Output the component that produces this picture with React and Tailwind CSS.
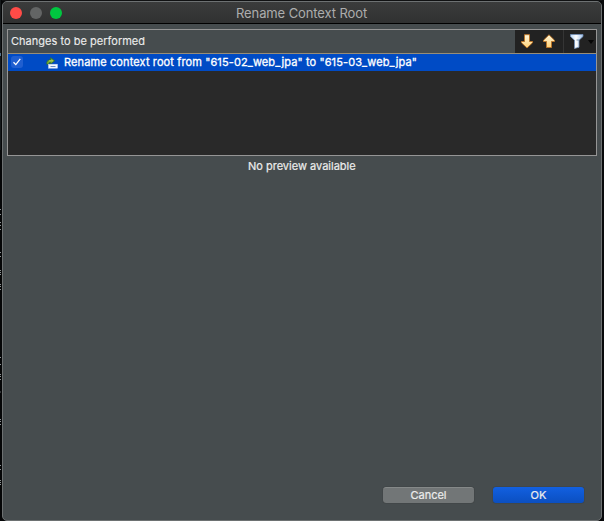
const ticks = [209, 214, 222, 225, 229, 252, 256, 270, 272, 274, 284, 286, 289, 357, 364, 374, 376, 379, 419, 421, 424, 465, 469, 480, 482, 484];

function BackgroundEdge() {
  return (
    <svg className="block h-[521px] w-0.5 shrink-0" viewBox="0 0 2 521" shapeRendering="crispEdges">
      <rect width="2" height="521" fill="#050607" />
      <rect width="1" height="150" fill="#15191b" />
      <rect y="53" width="1" height="3" fill="#56758f" />
      {ticks.map((y) => (
        <rect key={y} y={y} width="1" height="1" fill="#8b9092" />
      ))}
      <rect y="391" width="1" height="2" fill="#333638" />
    </svg>
  );
}

function Arrow({ up }) {
  return (
    <svg className="block h-[15px] w-3" viewBox="0 0 12 15">
      <defs>
        <linearGradient id={up ? "goldUp" : "goldDown"} x1="0" y1="0" x2="0" y2="1">
          <stop offset="0" stopColor="#fff7dc" />
          <stop offset="1" stopColor="#ffd175" />
        </linearGradient>
      </defs>
      <path
        d={up ? "M3.5 13.5h5V7.500h3V6.200L6 .8.500 6.200v1.300h3z" : "M3.5 .7h5v6.8h3v1.3L6 14 .5 8.800V7.500h3z"}
        fill={up ? "url(#goldUp)" : "url(#goldDown)"}
        stroke="#b9752b"
        strokeLinejoin="round"
      />
    </svg>
  );
}

function FilterIcon() {
  return (
    <svg className="block h-[15px] w-[14px]" viewBox="0 0 14 15">
      <defs>
        <linearGradient id="funnel">
          <stop offset="0" stopColor="#b8d6f5" />
          <stop offset=".45" stopColor="#ffffff" />
          <stop offset="1" stopColor="#9fc0e8" />
        </linearGradient>
      </defs>
      <path d="M.5.5h12.500v2L9 6.200v7L4.500 14.500V6.200L.5 2.500z" fill="url(#funnel)" stroke="#7391b9" strokeWidth=".8" />
      <path d="M6.500 6h3" stroke="#58789c" strokeWidth=".8" />
    </svg>
  );
}

function RenameIcon() {
  return (
    <svg className="block h-3 w-3" viewBox="0 0 12 12">
      <path d="M.7 7.200C.3 4.300 2 2.800 4.500 2.800V.6L8.800 3.800 4.500 7V5.500C3.300 5.500 2.800 6 3 7.200z" fill="#72aa35" stroke="#2e682b" strokeWidth=".6" />
      <path d="M3 3.900 7 3.800" stroke="#d3da61" strokeWidth=".8" />
      <rect x="2.500" y="7.200" width="9" height="4" fill="#f4f8ff" stroke="#c6d6ed" strokeWidth=".5" />
      <path d="M4.500 9.500h5" stroke="#6d8fc4" />
    </svg>
  );
}

export default function App() {
  return (
    <div className="flex h-[521px] w-[604px] overflow-hidden bg-[#050607] font-['Inter','Liberation_Sans',sans-serif] text-[11px] leading-4 text-[#ececec]">
      <BackgroundEdge />
      <div className="flex h-[521px] w-[600px] shrink-0 flex-col border-t border-[#101112]">
        <main className="flex h-[520px] flex-col overflow-hidden rounded-[5px] border border-[#6d7172] bg-[#464c4e]">
          <header className="flex h-[22px] shrink-0 items-center border-b border-black bg-linear-to-b from-[#3b3c3c] to-[#303131] pl-[7px]">
            <div className="flex gap-2">
              <span className="size-3 rounded-full bg-[#ff4b47]" />
              <span className="size-3 rounded-full bg-[#636565]" />
              <span className="size-3 rounded-full bg-[#00c740]" />
            </div>
            <h1 className="ml-[174px] whitespace-nowrap text-[13px] font-normal tracking-[-0.1px] text-[#acadad]">Rename Context Root</h1>
          </header>
          <section className="mt-[5px] ml-1 flex h-[127px] w-[590px] shrink-0 flex-col border border-[#959595] bg-[#292929]">
            <div className="flex h-[23px] shrink-0 bg-[#464c4e]">
              <span className="mt-[3px] ml-[3px] whitespace-nowrap tracking-[0.02px] [-webkit-text-stroke:0.1px]">Changes to be performed</span>
              <div className="ml-auto flex h-[23px] w-[81px] bg-[#222] pt-1">
                <span className="ml-1.5"><Arrow /></span>
                <span className="ml-2.5"><Arrow up /></span>
                <span className="-mt-1 ml-2 h-[23px] w-px bg-[#353535]" />
                <span className="ml-1.5"><FilterIcon /></span>
                <svg className="mt-[6px] ml-[4px] h-1 w-[6px]" viewBox="0 0 6 4"><path d="M0 0h6L3 4z" fill="#050505" /></svg>
              </div>
            </div>
            <div className="flex h-[18px] shrink-0 border-t border-[#988e78] bg-[#004bc5] text-white">
              <span className="mt-[2px] ml-[3px] flex size-3 items-center justify-center rounded-[3px] bg-[#205fd0]">
                <svg className="size-[10px]" viewBox="0 0 10 10"><path d="m1.500 5.300 2.300 2.300L8.300 1.800" fill="none" stroke="#fff" strokeWidth="1.300" /></svg>
              </span>
              <span className="mt-[3px] ml-[23px]"><RenameIcon /></span>
              <span className="ml-[6px] whitespace-nowrap tracking-[0.115px] [-webkit-text-stroke:0.3px]">Rename context root from "615-02_web_jpa" to "615-03_web_jpa"</span>
            </div>
          </section>
          <p className="mt-[2px] ml-[245px] whitespace-nowrap [-webkit-text-stroke:0.2px]">No preview available</p>
          <footer className="mt-auto mb-[17px] flex gap-[19px] pl-[380px]">
            <button className="h-4 w-[91px] rounded-[3px] border-t border-[#858989] bg-[#727677] text-[11px] leading-[15px] shadow-[0_0_1px_#222] [-webkit-text-stroke:0.2px]">Cancel</button>
            <button className="h-4 w-[91px] rounded-[3px] bg-linear-to-b from-[#1260e1] to-[#0b4fc0] text-[11px] leading-4 shadow-[0_0_1px_#123] [-webkit-text-stroke:0.2px]">OK</button>
          </footer>
        </main>
      </div>
      <div className="h-[521px] w-0.5 bg-[#08090b]" />
    </div>
  );
}
